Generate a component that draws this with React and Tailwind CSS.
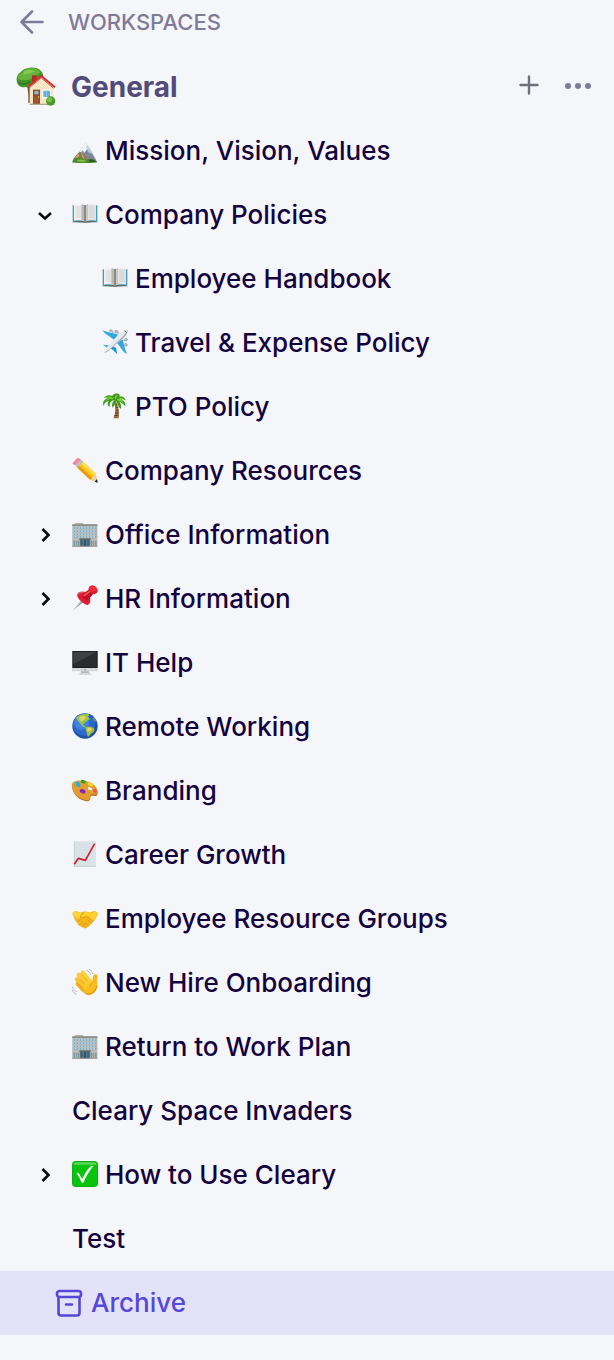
import React, { useState } from 'react';

const ART = {
    mountain: (
        <>
            <path d="M24 42 L40 18 L46 24 L52 32 L76 76 L8 76 Z" fill="#8d99a6" />
            <path d="M24 42 L40 18 L46 24 L54 36 L50 42 L44 37 L38 48 L32 40 L24 48 Z" fill="#f4f8fb" />
            <path d="M42 22 L56 38 L62 50 L50 46 L44 34 Z" fill="#b9cbe0" />
            <path d="M34 50 L44 40 L50 50 L60 52 L74 74 L38 70 Z" fill="#7d8894" />
            <path d="M4 66 L16 50 L24 44 L34 52 L44 64 L54 76 L2 76 Z" fill="#8a7a50" />
            <path d="M8 64 L18 50 L22 54 L16 68 Z M26 46 L34 56 L40 70 L32 62 Z" fill="#c9a76a" />
            <path d="M0 76 C4 64 12 60 20 62 C30 60 34 70 44 68 C54 62 66 66 76 76 C54 79 20 79 0 76 Z" fill="#4f8a2c" />
            <path d="M14 70 C24 64 34 70 44 72 C34 76 22 76 14 70 Z" fill="#8dbb45" />
            <path d="M50 70 C58 64 66 68 72 75 L52 76 Z" fill="#2f5f2a" />
        </>
    ),
    book: (
        <>
            <path d="M2 13 H76 V64 H44 L39 66 L34 64 H2 Z" fill="#3f9dc0" />
            <path d="M5 60 H34 L39 63 L44 60 H73 V63 L39 65 L5 63 Z" fill="#6d6b60" />
            <path d="M6 12 C18 8 32 9 38 14 V61 C30 57 16 57 6 59 Z" fill="#f2f1ef" />
            <path d="M72 12 C60 8 46 9 40 14 V61 C48 57 62 57 72 59 Z" fill="#e4e3e4" />
            <path d="M28 10 C34 11 37 12 38 14 V61 C36 59 33 58 28 57 Z" fill="#b9b7b5" />
            <path d="M48 10 C44 11 41 12 40 14 V61 C42 59 45 58 48 57 Z" fill="#c8c6c5" />
            <path d="M11 18 H28 M11 24 H28 M11 30 H28 M11 36 H28 M11 42 H28 M11 48 H28 M51 18 H67 M51 24 H67 M51 30 H67 M51 36 H67 M51 42 H67 M51 48 H67" stroke="#c5c5c9" strokeWidth="2" />
            <path d="M36 12 H42 V62 L39 65 L36 62 Z" fill="#8f8a80" />
        </>
    ),
    plane: (
        <>
            <path d="M1 3 L14 8 L46 16 L52 28 L38 34 L8 12 Z" fill="#2fa8e0" />
            <path d="M75 75 L70 62 L62 32 L50 26 L44 40 L66 70 Z" fill="#2fa8e0" />
            <path d="M2 47 L14 48 L28 52 L28 60 L20 60 Z" fill="#45b6e6" />
            <path d="M46 76 L32 62 L22 56 L28 50 L42 56 Z" fill="#1f95cf" />
            <path d="M24 8 C20 3 25 0 31 5 L34 12 M40 12 C36 4 42 1 48 7 L49 15 M68 30 C75 26 79 32 73 36 L64 34 M68 44 C77 42 78 50 72 52 L66 48" fill="#bcc0c8" stroke="#858b95" strokeWidth="2" />
            <path d="M76 1 C68 0 58 6 50 15 L16 54 C10 62 6 68 7 71 C12 72 17 68 24 61 L62 29 C72 20 79 9 76 1 Z" fill="#e9eaee" />
            <path d="M77 2 C78 12 70 22 62 29 L24 61 C17 68 12 72 7 71 C20 64 34 50 46 38 C60 26 70 16 77 2 Z" fill="#a4a8b2" />
            <path d="M67 5 L73 10" stroke="#4b5563" strokeWidth="3" />
        </>
    ),
    palm: (
        <>
            <path d="M36 30 C42 44 42 60 34 76 H50 C52 60 50 44 43 28 Z" fill="#9a6b3c" />
            <path d="M40 36 L46 35 M41 44 L49 43 M41 52 L50 51 M39 60 L50 59 M37 68 L49 67" stroke="#60401f" strokeWidth="3" />
            <path d="M37 22 C28 22 22 30 23 42 C14 38 17 28 21 25 C12 26 7 30 5 39 C0 28 7 18 18 16 C12 12 9 14 5 17 C8 7 22 4 31 9 C32 3 42 0 50 3 C54 5 54 9 52 11 C62 8 70 13 71 23 C66 19 62 18 57 19 C67 24 72 31 70 40 C64 33 58 28 52 27 C57 33 59 40 56 48 C50 44 47 34 43 25 C39 32 36 39 32 44 C28 38 30 28 37 22 Z" fill="#3f9b1b" />
            <path d="M12 13 C20 8 30 12 36 18 C24 16 14 22 9 28 C13 18 20 15 28 16 Z M38 16 C38 8 44 5 49 7 C44 10 42 14 41 19 Z M44 20 C54 14 62 14 66 17 C58 17 54 20 66 32 C58 26 50 23 44 22 Z" fill="#7fd43a" />
        </>
    ),
    pencil: (
        <>
            <path d="M2 18 L15 4 C18 2 22 4 27 8 L10 25 C5 23 0 21 2 18 Z" fill="#ef8b93" />
            <path d="M10 25 L27 8 L34 14 L16 32 Z" fill="#a9b4bd" />
            <path d="M13 28 L30 11" stroke="#e4eaee" strokeWidth="2" />
            <path d="M16 32 L34 14 L72 50 L55 69 Z" fill="#fbc51e" />
            <path d="M16 32 L22 26 L61 62 L55 69 Z" fill="#e89a10" />
            <path d="M28 20 L34 14 L72 50 L67 56 Z" fill="#ffe052" />
            <path d="M55 69 L72 50 L77 77 Z" fill="#efd0a0" />
            <path d="M68 74 L75 66 L77 77 Z" fill="#222222" />
        </>
    ),
    building: (
        <>
            <path d="M8 6 H34 V12 H8 Z" fill="#b9b3a6" />
            <path d="M1 10 H76 V76 H1 Z" fill="#aeb3b3" />
            <path d="M1 10 H76 V15 H1 Z" fill="#8f8c86" />
            <path d="M5 20 H72 M5 29 H72 M5 38 H72 M5 47 H72" stroke="#dcebf2" strokeWidth="6" strokeDasharray="6 3" />
            <path d="M6 21 H72 M6 30 H72 M6 39 H72 M6 48 H72" stroke="#5c9fbe" strokeWidth="4" strokeDasharray="4 5" />
            <path d="M2 53 H75 V57 H2 Z" fill="#c5c0b6" />
            <path d="M5 59 H22 V72 H5 Z M56 59 H73 V72 H56 Z" fill="#7d929c" />
            <path d="M10 58 V73 M16 58 V73 M62 58 V73 M68 58 V73" stroke="#cdd5d6" strokeWidth="2" />
            <path d="M22 52 H56 V57 H22 Z" fill="#5b6a70" />
            <path d="M25 57 H53 V76 H25 Z" fill="#294d63" />
            <path d="M30 57 V76 M35 57 V76 M43 57 V76 M48 57 V76" stroke="#73a0b5" strokeWidth="2" />
            <path d="M1 74 H76 V77 H1 Z" fill="#868580" />
        </>
    ),
    pin: (
        <>
            <path d="M3 76 L28 46 L34 52 Z" fill="#8b9cab" />
            <path d="M4 75 L29 48" stroke="#cfdbe4" strokeWidth="2" />
            <path d="M16 27 C22 19 32 18 40 21 L50 14 C49 6 56 1 64 2 C72 4 78 11 77 20 C75 26 68 28 63 27 L54 38 C57 47 54 55 48 60 C42 60 34 56 27 49 C19 42 14 33 16 27 Z" fill="#dd1f30" />
            <path d="M50 14 C49 6 56 1 64 2 C70 4 74 8 76 12 C70 20 58 22 50 14 Z" fill="#f02c3b" />
            <path d="M30 30 L52 16 C54 22 58 25 62 27 L46 48 C38 46 32 40 30 30 Z" fill="#c00f25" />
            <path d="M36 32 L53 20" stroke="#f4606c" strokeWidth="4" strokeLinecap="round" />
            <path d="M17 28 C23 22 29 22 34 23" stroke="#f4606c" strokeWidth="3" fill="none" />
        </>
    ),
    desktop: (
        <>
            <path d="M28 64 H50 L53 75 H25 Z" fill="#b5b8ba" />
            <path d="M20 75 C28 71 50 71 58 75 V78 H20 Z" fill="#d6d8da" />
            <path d="M2 6 H76 C78 6 78 7 78 8 V65 C78 67 77 67 76 67 H2 C1 67 0 67 0 65 V8 C0 7 0 6 2 6 Z" fill="#d5d7d9" />
            <path d="M1 6 H77 V57 H1 Z" fill="#1c1c1d" />
            <path d="M4 9 H74 V54 H4 Z" fill="#2a2b2c" />
            <path d="M4 9 H74 L4 46 Z" fill="#3f4041" />
            <circle cx="39" cy="62" r="2" fill="#777777" />
        </>
    ),
    globe: (
        <>
            <circle cx="39" cy="39" r="38" fill="#1c4fa8" />
            <circle cx="36" cy="35" r="33" fill="#2d69cd" />
            <circle cx="29" cy="29" r="22" fill="#3f83e2" />
            <path d="M13 14 C22 4 38 1 48 3 C54 5 52 10 46 10 C50 14 54 14 52 20 C46 20 46 26 40 28 C36 32 34 32 34 37 C38 38 42 42 40 44 C30 42 26 34 22 28 C18 24 14 20 13 14 Z" fill="#9cc24e" />
            <path d="M24 10 C32 6 40 8 42 14 C36 22 30 26 26 24 C20 18 22 14 24 10 Z" fill="#d5d867" />
            <path d="M42 43 C52 38 62 42 68 50 C66 58 58 60 54 66 C50 72 46 72 46 68 C47 60 38 52 42 43 Z" fill="#a9bd45" />
            <path d="M46 46 C52 42 58 46 60 50 C54 52 50 56 47 56 Z" fill="#e0d767" />
            <path d="M62 12 C68 16 72 22 74 28 C68 26 62 20 62 12 Z" fill="#77a559" />
        </>
    ),
    palette: (
        <>
            <path d="M3 18 C14 9 38 11 54 18 C72 27 80 43 76 53 C72 60 62 54 56 58 C53 62 58 68 50 72 C40 74 22 68 12 56 C3 46 -4 28 3 18 Z" fill="#b36d14" />
            <path d="M3 16 C14 8 38 9 54 16 C72 25 80 40 76 49 C72 56 60 50 55 55 C52 60 58 65 50 69 C40 71 22 65 12 53 C3 43 -4 26 3 16 Z" fill="#e29d30" />
            <ellipse cx="54" cy="35" rx="7" ry="4" fill="#f5f6fb" transform="rotate(25 54 35)" />
            <ellipse cx="34" cy="14" rx="8" ry="5" fill="#24a52b" transform="rotate(15 34 14)" />
            <ellipse cx="18" cy="22" rx="9" ry="6" fill="#25aee0" transform="rotate(60 18 22)" />
            <ellipse cx="55" cy="22" rx="9" ry="5" fill="#f2dc1b" transform="rotate(30 55 22)" />
            <ellipse cx="32" cy="43" rx="9" ry="6" fill="#8125c4" transform="rotate(20 32 43)" />
            <ellipse cx="69" cy="42" rx="7" ry="5" fill="#ec574f" transform="rotate(50 69 42)" />
        </>
    ),
    chart: (
        <>
            <path d="M6 1 H72 V77 H6 Z" fill="#dce5ea" />
            <path d="M14 1 V77 M22 1 V77 M30 1 V77 M38 1 V77 M46 1 V77 M54 1 V77 M62 1 V77 M6 10 H72 M6 19 H72 M6 28 H72 M6 37 H72 M6 46 H72 M6 55 H72 M6 64 H72" stroke="#cbd8df" strokeWidth="1" />
            <path d="M7 2 V76 H72" fill="none" stroke="#b6c4cb" strokeWidth="2" />
            <path d="M7 70 L19 52 L40 58 L68 8" fill="none" stroke="#d3222a" strokeWidth="5" strokeLinejoin="round" />
        </>
    ),
    handshake: (
        <>
            <path d="M1 24 C5 19 10 17 14 18 L25 23 C35 18 46 18 54 23 L65 18 C70 17 75 20 78 25 C76 34 71 42 66 48 C58 57 49 66 42 70 C36 71 31 67 26 64 C21 63 18 59 16 54 C10 49 5 38 1 24 Z" fill="#f5b61d" />
            <path d="M2 25 C6 19 11 18 14 19 L30 26 L18 42 C10 38 5 32 2 25 Z" fill="#ffd53d" />
            <path d="M36 22 C46 18 56 26 62 23 L66 19 C71 19 75 22 77 26 C74 36 68 43 63 48 L44 34 C38 36 32 40 27 38 C24 35 32 26 36 22 Z" fill="#ffd02e" />
            <path d="M36 22 C30 27 24 34 27 38 C33 40 38 35 44 34 L64 48 M18 50 L24 44 M24 58 L31 50 M32 65 L38 56 M40 54 L50 62 M48 46 L58 55" fill="none" stroke="#cf860f" strokeWidth="2" strokeLinecap="round" />
        </>
    ),
    wave: (
        <>
            <path d="M44 4 C50 6 54 11 56 17 M51 1 C57 4 61 9 63 15 M1 54 C4 61 9 66 15 68 M0 62 C3 69 7 73 12 75" fill="none" stroke="#a6aab2" strokeWidth="3" strokeDasharray="4 1" />
            <path d="M70 22 C69 32 68 38 66 50" fill="none" stroke="#f7b51c" strokeWidth="13" strokeLinecap="round" />
            <path d="M24 34 L46 22 L56 32 L66 36 L76 38 C77 50 74 62 67 70 C60 78 46 80 37 73 C30 68 24 62 20 56 Z" fill="#f9bd22" />
            <path d="M16 45 L34 62" fill="none" stroke="#f3ad1a" strokeWidth="11" strokeLinecap="round" />
            <path d="M14 31 L40 57" fill="none" stroke="#fcc52a" strokeWidth="12" strokeLinecap="round" />
            <path d="M20 17 L46 46" fill="none" stroke="#fdcb30" strokeWidth="12" strokeLinecap="round" />
            <path d="M32 10 L56 38" fill="none" stroke="#ffd23c" strokeWidth="12" strokeLinecap="round" />
            <path d="M26 13 L45 35 M17 24 L37 45 M15 40 L31 55" fill="none" stroke="#d28f14" strokeWidth="2" strokeLinecap="round" />
            <path d="M64 38 C58 41 55 46 56 52" fill="none" stroke="#d28f14" strokeWidth="2" strokeLinecap="round" />
            <path d="M42 74 C56 80 70 70 75 52" fill="none" stroke="#e59a14" strokeWidth="4" strokeLinecap="round" />
        </>
    ),
    check: (
        <>
            <rect width="78" height="78" rx="12" fill="#12a51a" />
            <rect x="2" y="2" width="74" height="74" rx="10" fill="#08c40d" />
            <path d="M12 4 H66 C70 4 73 7 73 11 H5 C5 7 8 4 12 4 Z" fill="#5bd75b" />
            <path d="M14 37 C17 34 20 36 22 40 L31 54 C37 38 46 24 58 14 L64 15 C52 30 42 46 34 65 H29 C25 55 20 46 14 37 Z" fill="#ffffff" />
        </>
    ),
};

const Emoji = ({ name }) => (
    <svg viewBox="0 0 78 78" className="mb-0.5 mr-[7px] size-[26px] shrink-0" aria-hidden="true">
        {ART[name]}
    </svg>
);

const House = () => (
    <svg viewBox="0 0 120 120" className="size-10 shrink-0" aria-hidden="true">
        <path d="M32 52 H46 V108 H37 C38 90 37 70 32 52 Z" fill="#7a5130" />
        <path d="M42 2 C56 1 68 4 75 12 C81 18 83 26 82 34 L50 60 C42 64 34 62 28 60 C16 64 5 56 3 46 C0 34 4 22 14 16 C20 7 30 3 42 2 Z" fill="#43932b" />
        <path d="M42 4 C56 3 68 8 73 16 C66 24 56 26 48 32 C36 42 18 40 6 36 C5 28 10 20 18 17 C24 9 33 5 42 4 Z" fill="#65b53d" />
        <path d="M26 12 C36 8 48 8 56 13 C46 20 32 22 20 22 Z" fill="#82c952" />
        <path d="M8 46 C18 54 30 52 42 44" fill="none" stroke="#2f7520" strokeWidth="4" strokeLinecap="round" />
        <path d="M48 25 H62 V44 H48 Z" fill="#b3272a" />
        <path d="M41 58 L77 28 L112 60 V113 H41 Z" fill="#f7e6c4" />
        <path d="M36 59 L76 27 L117 61" fill="none" stroke="#d92b2f" strokeWidth="6" />
        <path d="M40 62 L76 33 L113 64" fill="none" stroke="#9b1c22" strokeWidth="2" />
        <path d="M51 68 H72 V112 H51 Z" fill="#8d4a26" />
        <path d="M55 72 H68 V82 H55 Z" fill="#8fb6cf" />
        <path d="M54 88 H69 V108 H54 Z" fill="#a0562e" />
        <circle cx="68" cy="90" r="2" fill="#f3cf55" />
        <path d="M79 68 H105 V94 H79 Z" fill="#ffffff" />
        <path d="M82 71 H102 V90 H82 Z" fill="#63aee2" />
        <path d="M92 70 V90" stroke="#a9d5f2" strokeWidth="2" />
        <path d="M41 110 H112 V114 H41 Z" fill="#b3a78f" />
        <circle cx="104" cy="102" r="14" fill="#4c9a2c" />
        <circle cx="101" cy="98" r="8" fill="#78bd46" />
    </svg>
);

const Chevron = ({ open }) => (
    <svg viewBox="0 0 26 26" className="size-[26px]" fill="none" stroke="#0a0a0a" strokeWidth="2.6" aria-hidden="true">
        {open ? <path d="M7 11 L13 16.5 L19 11" /> : <path d="M10.5 7 L16.5 13 L10.5 19" />}
    </svg>
);

const pages = [
    { title: 'Mission, Vision, Values', icon: 'mountain' },
    {
        title: 'Company Policies',
        icon: 'book',
        expandable: true,
        children: [
            { title: 'Employee Handbook', icon: 'book' },
            { title: 'Travel & Expense Policy', icon: 'plane' },
            { title: 'PTO Policy', icon: 'palm' },
        ],
    },
    { title: 'Company Resources', icon: 'pencil' },
    { title: 'Office Information', icon: 'building', expandable: true },
    { title: 'HR Information', icon: 'pin', expandable: true },
    { title: 'IT Help', icon: 'desktop' },
    { title: 'Remote Working', icon: 'globe' },
    { title: 'Branding', icon: 'palette' },
    { title: 'Career Growth', icon: 'chart' },
    { title: 'Employee Resource Groups', icon: 'handshake' },
    { title: 'New Hire Onboarding', icon: 'wave' },
    { title: 'Return to Work Plan', icon: 'building' },
    { title: 'Cleary Space Invaders' },
    { title: 'How to Use Cleary', icon: 'check', expandable: true },
    { title: 'Test' },
];

const PageItem = ({ page, open, onToggle }) => (
    <li>
        <div className="flex h-16 items-center pl-8">
            <div className="mr-3.5 w-[26px] shrink-0">
                {page.expandable && (
                    <button type="button" className="block" aria-label={`Toggle ${page.title}`} aria-expanded={open} onClick={onToggle}>
                        <Chevron open={open} />
                    </button>
                )}
            </div>
            <a href="#page" className="flex items-center whitespace-nowrap">
                {page.icon && <Emoji name={page.icon} />}
                {page.title}
            </a>
        </div>
        {open && page.children && (
            <ul className="pl-[30px]">
                {page.children.map((child) => <PageItem key={child.title} page={child} />)}
            </ul>
        )}
    </li>
);

const App = () => {
    const [openPages, setOpenPages] = useState({ 'Company Policies': true });

    const toggle = (title) => {
        setOpenPages(prev => ({ ...prev, [title]: !prev[title] }));
    };

    return (
        <aside className="min-h-screen overflow-hidden bg-[#f4f6fa] pb-6 font-['Inter',sans-serif] text-[26px] font-medium leading-8 text-[#14023f]">
            <a href="#workspaces" className="flex h-11 items-center pl-5 text-[22px] text-[#7f7a99]">
                <svg viewBox="0 0 24 24" className="mr-6 size-6" fill="none" stroke="currentColor" strokeWidth="2.6" strokeLinecap="round" strokeLinejoin="round" aria-hidden="true">
                    <path d="M22.5 12 H1.5 M12 1.5 L1.5 12 L12 22.5" />
                </svg>
                WORKSPACES
            </a>

            <header className="mt-[11px] flex h-16 items-center pl-4 pr-[23px]">
                <House />
                <h1 className="ml-[15px] grow text-[28px] font-bold text-[#524a78]">General</h1>
                <button type="button" aria-label="Add page" className="mr-[26px]">
                    <svg viewBox="0 0 20 20" className="mb-1 size-5" fill="none" stroke="#70707f" strokeWidth="2.4" strokeLinecap="round" aria-hidden="true">
                        <path d="M10 1.5 V18.5 M1.5 10 H18.5" />
                    </svg>
                </button>
                <button type="button" aria-label="More options">
                    <svg viewBox="0 0 26 8" className="mb-0.5 h-2 w-[26px]" fill="#7f7a99" aria-hidden="true">
                        <circle cx="3" cy="4" r="3" />
                        <circle cx="13" cy="4" r="3" />
                        <circle cx="23" cy="4" r="3" />
                    </svg>
                </button>
            </header>

            <nav>
                <ul>
                    {pages.map((page) => (
                        <PageItem key={page.title} page={page} open={!!openPages[page.title]} onToggle={() => toggle(page.title)} />
                    ))}
                </ul>
                <a href="#archive" className="flex h-16 items-center bg-[#e4e2f8] pl-[55px] text-[#5548d9]">
                    <svg viewBox="0 0 28 28" className="mr-2 size-7" fill="none" stroke="currentColor" strokeWidth="2.6" strokeLinecap="round" strokeLinejoin="round" aria-hidden="true">
                        <rect x="2" y="2" width="24" height="6" rx="2.5" />
                        <path d="M3.5 8 V24 Q3.5 26.5 6 26.5 H22 Q24.5 26.5 24.5 24 V8 M11 15.5 H17" />
                    </svg>
                    Archive
                </a>
            </nav>
        </aside>
    );
};

export default App;
